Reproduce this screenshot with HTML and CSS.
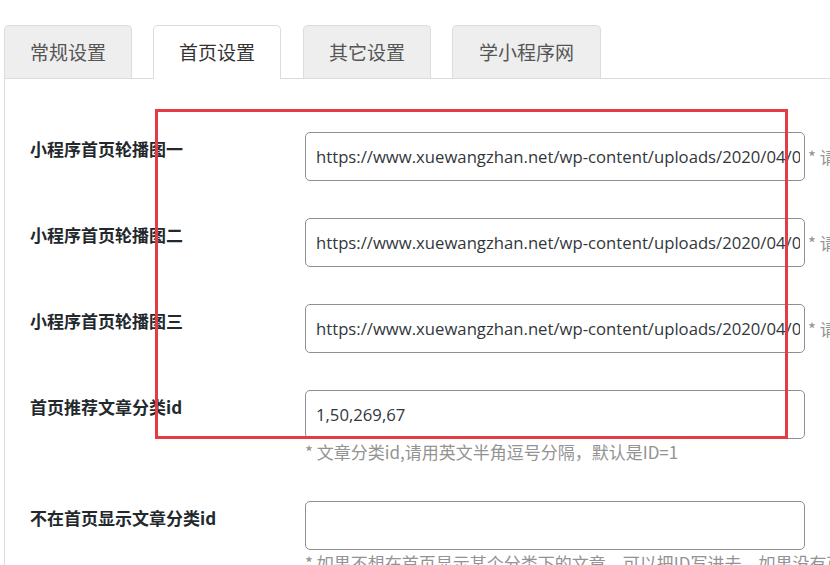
FILE: index.html
```html
<!DOCTYPE html>
<html lang="zh-CN">
<head>
<meta charset="utf-8">
<title>首页设置</title>
<link rel="stylesheet" href="styles.css">
</head>
<body>
<div class="page">
  <nav class="tabs">
    <a class="tab">常规设置</a>
    <a class="tab active">首页设置</a>
    <a class="tab">其它设置</a>
    <a class="tab">学小程序网</a>
  </nav>
  <div class="panel">
    <div class="form">
      <div class="row">
        <div class="label">小程序首页轮播图一</div>
        <div class="field inline">
          <input class="text" type="text" value="https://www.xuewangzhan.net/wp-content/uploads/2020/04/0411-banner1.jpg">
          <span class="desc">* 请输入轮播图片地址</span>
        </div>
      </div>
      <div class="row">
        <div class="label">小程序首页轮播图二</div>
        <div class="field inline">
          <input class="text" type="text" value="https://www.xuewangzhan.net/wp-content/uploads/2020/04/0411-banner2.jpg">
          <span class="desc">* 请输入轮播图片地址</span>
        </div>
      </div>
      <div class="row">
        <div class="label">小程序首页轮播图三</div>
        <div class="field inline">
          <input class="text" type="text" value="https://www.xuewangzhan.net/wp-content/uploads/2020/04/0411-banner3.jpg">
          <span class="desc">* 请输入轮播图片地址</span>
        </div>
      </div>
      <div class="row">
        <div class="label">首页推荐文章分类id</div>
        <div class="field">
          <input class="text" type="text" value="1,50,269,67">
          <p class="desc">* 文章分类id,请用英文半角逗号分隔，默认是ID=1</p>
        </div>
      </div>
      <div class="row">
        <div class="label">不在首页显示文章分类id</div>
        <div class="field">
          <input class="text" type="text" value="">
          <p class="desc">* 如果不想在首页显示某个分类下的文章，可以把ID写进去，如果没有可以不填</p>
        </div>
      </div>
    </div>
  </div>
  <div class="annotation"></div>
</div>
</body>
</html>
```
FILE: styles.css
```css
html, body {
  margin: 0;
  padding: 0;
  background: #ffffff;
  overflow: hidden;
}
body {
  width: 830px;
  height: 565px;
  font-family: "Noto Sans CJK SC", "Open Sans", sans-serif;
  color: #23282d;
}
.page {
  position: relative;
  height: 565px;
  overflow: hidden;
}
.tabs {
  display: flex;
  padding: 25px 0 0 4px;
  gap: 21px;
}
.tab {
  display: block;
  box-sizing: border-box;
  height: 53px;
  padding: 0 25px;
  font-size: 19px;
  line-height: 52px;
  color: #555555;
  background: #eeeeee;
  border: 1px solid #dcdcdc;
  border-bottom: none;
  border-radius: 5px 5px 0 0;
  white-space: nowrap;
  position: relative;
  z-index: 1;
}
.tab.active {
  background: #ffffff;
  color: #333333;
  height: 54px;
  margin-bottom: -1px;
}
.tab:nth-child(3) {
  margin-left: 1px;
}
.tab:nth-child(4) {
  padding: 0 26px;
}
.panel {
  border-top: 1px solid #dcdcdc;
  border-left: 1px solid #dcdcdc;
  margin-left: 4px;
  padding-left: 25px;
  height: 600px;
}
.form {
  padding-top: 53px;
}
.row {
  display: grid;
  grid-template-columns: 275px 1fr;
  margin-bottom: 37px;
}
.label {
  font-size: 17px;
  font-weight: bold;
  line-height: 24px;
  padding-top: 5px;
  color: #23282d;
  white-space: nowrap;
}
.field {
  min-width: 0;
}
.field.inline {
  display: flex;
  align-items: center;
  gap: 3px;
  white-space: nowrap;
}
.text {
  box-sizing: border-box;
  width: 500px;
  height: 49px;
  margin: 0;
  padding: 0 4px 0 10px;
  flex: none;
  border: 1px solid #8c8f94;
  border-radius: 5px;
  background: #ffffff;
  font-family: "Open Sans", "Noto Sans CJK SC", sans-serif;
  font-size: 16.7px;
  color: #32373c;
  outline: none;
}
.desc {
  margin: 0;
  font-size: 17px;
  line-height: 25px;
  color: #939393;
  white-space: nowrap;
}
.annotation {
  position: absolute;
  left: 155px;
  top: 109px;
  width: 633px;
  height: 330px;
  box-sizing: border-box;
  border: 3px solid #e33c44;
  pointer-events: none;
}
```
